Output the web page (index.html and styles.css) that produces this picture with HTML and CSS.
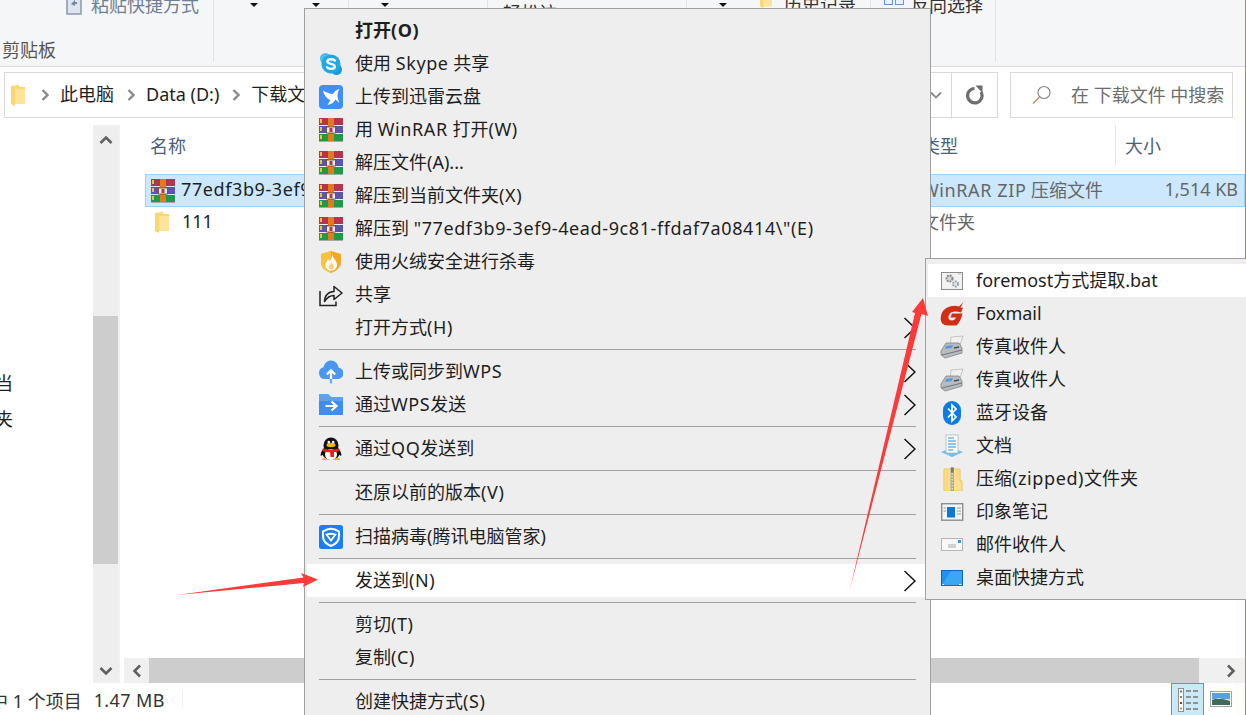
FILE: index.html
```html
<!DOCTYPE html>
<html lang="zh-CN">
<head>
  <meta charset="UTF-8" />
  <title>下载文件</title>
  <link rel="stylesheet" href="styles.css">
</head>
<body>
  <svg class="defs" xmlns="http://www.w3.org/2000/svg">
    <symbol id="i-rar" viewBox="0 0 24 24">
      <rect y="0" width="24" height="7" fill="#b5344f"/>
      <rect y="8" width="24" height="7" fill="#5a55ad"/>
      <rect y="16" width="24" height="7" fill="#1f9a4a"/>
      <rect y="23" width="24" height="1" fill="#a8a8a8"/>
      <rect x="1" y="1" width="2" height="4" fill="#f2c230"/>
      <rect x="1" y="9" width="2" height="4" fill="#f2c230"/>
      <rect x="1" y="17" width="2" height="4" fill="#f2c230"/>
      <rect x="9" y="0" width="6" height="23" fill="#e27b20"/>
      <rect x="7.5" y="9" width="9" height="6" fill="#f4efe6" stroke="#70401c" stroke-width=".8"/>
      <rect x="10.5" y="10" width="3" height="4" fill="#b5344f"/>
    </symbol>
    <symbol id="i-skype" viewBox="0 0 24 24">
      <circle cx="6.5" cy="6.5" r="5.5" fill="#4dbcec"/>
      <circle cx="17.5" cy="17.5" r="5.5" fill="#1b9ad8"/>
      <circle cx="12" cy="12" r="9.5" fill="#1fa9e6"/>
      <path d="M16 8.6C14.6 6.8 8.6 6.4 8.4 9.4 8.2 12.6 16 11 15.8 14.6 15.6 17.6 9.6 17.4 8 15.2" fill="none" stroke="#fff" stroke-width="2.4" stroke-linecap="round"/>
    </symbol>
    <symbol id="i-xunlei" viewBox="0 0 24 24">
      <rect width="24" height="24" rx="4" fill="#3f8ff6"/>
      <path d="M20.5 4C17.5 4.800 15.500 6.500 14 9 11 8.800 7.500 7.800 4 5.500 5 10 8 14 11.500 15L8.500 20C12 19.500 15 17.500 16.500 14.500L20.500 18C19 15 18.500 12.500 18.500 10 18.500 8 19.300 6 20.500 4Z" fill="#fff"/>
    </symbol>
    <symbol id="i-huorong" viewBox="0 0 24 24">
      <path d="M12 1 22 4V12C22 18 17 21 12 23 7 21 2 18 2 12V4Z" fill="#f6a821"/>
      <path d="M12 1V23C7 21 2 18 2 12V4Z" fill="#f9c23c"/>
      <path d="M13 4C14 9 18 10.500 18 15 18 18.500 15.500 20.500 12 20.500 8.500 20.500 6.500 18 6.500 15 6.500 12.500 8.500 11.500 9 9L11 11C12.500 9 13.200 6.500 13 4Z" fill="#fff"/>
      <path d="M12.500 12C13 14 15 15 15 17 15 18.500 13.500 19.500 12 19.500 10.500 19.500 9.500 18.500 9.500 17 9.500 15.500 11.500 14.500 12.500 12Z" fill="#fbd27a"/>
    </symbol>
    <symbol id="i-share" viewBox="0 0 24 24">
      <path d="M1 8V22.500H17V18.500" fill="none" stroke="#222" stroke-width="1.500"/>
      <path d="M5.500 18.500C5.500 12.500 9.500 8.500 15 8.500V3.500L23 10 15 16.500V12.500C11 12.500 8 14.500 5.500 18.500Z" fill="none" stroke="#222" stroke-width="1.500" stroke-linejoin="round"/>
    </symbol>
    <symbol id="i-cloud" viewBox="0 0 24 24">
      <path d="M6 19A6 6 0 0 1 4.500 7.200C5.500 3 8.500 .5 12 .5 16 .5 19 3.500 19.500 7.500A5.800 5.800 0 0 1 18 19Z" fill="#4a97f2"/>
      <path d="M12 19V11M7.800 14.500 12 10.300 16.200 14.500" fill="none" stroke="#fff" stroke-width="2.300"/>
      <path d="M12 19V23.500" stroke="#6cabf5" stroke-width="2.300"/>
    </symbol>
    <symbol id="i-send" viewBox="0 0 24 24">
      <path d="M0 1H9L12 4H24V22H0Z" fill="#3e8df1"/>
      <path d="M0 1H9L12 4H24V8H0Z" fill="#5aa2f6"/>
      <path d="M6.500 13H17M12.500 8.500 17.500 13 12.500 17.500" fill="none" stroke="#fff" stroke-width="2.200"/>
    </symbol>
    <symbol id="i-qq" viewBox="0 0 24 24">
      <ellipse cx="12" cy="8.500" rx="7.500" ry="8" fill="#111"/>
      <ellipse cx="12" cy="16" rx="8.500" ry="7" fill="#111"/>
      <path d="M4 12C2 15 1 18 2 19L5 17ZM20 12C22 15 23 18 22 19L19 17Z" fill="#111"/>
      <ellipse cx="12" cy="17.500" rx="6" ry="5.500" fill="#fff"/>
      <ellipse cx="12" cy="8" rx="4.500" ry="2.200" fill="#f5b21e"/>
      <circle cx="9.800" cy="5" r="1.300" fill="#fff"/>
      <circle cx="14.200" cy="5" r="1.300" fill="#fff"/>
      <path d="M4 11C8 13 16 13 20 11L20.500 14C18 15 16 15 15 15V20H11.500L11 15C8 15.500 5 15 3.500 14Z" fill="#e2231a"/>
      <path d="M3 22C4 20.500 7 20.500 9 23H3ZM21 22C20 20.500 17 20.500 15 23H21Z" fill="#f5b21e"/>
    </symbol>
    <symbol id="i-guanjia" viewBox="0 0 24 24">
      <rect width="24" height="24" rx="2.500" fill="#1a7ff3"/>
      <path d="M4 6.500C9 3 15 3 20 6.500V11C20 16 16 19.500 12 21 8 19.500 4 16 4 11Z" fill="none" stroke="#fff" stroke-width="2"/>
      <path d="M7.500 9.500C10.500 8.500 13.500 8.500 16.500 9.500L12 15.500Z" fill="none" stroke="#fff" stroke-width="1.800"/>
    </symbol>
    <symbol id="i-bat" viewBox="0 0 24 24">
      <rect x="1.500" y="3.500" width="21" height="17" fill="#f2f2f2" stroke="#8c8c8c"/>
      <path d="M18 5H21" stroke="#bdbdbd"/>
      <circle cx="9.500" cy="9.500" r="3" fill="#d4d4d4" stroke="#858585" stroke-width="2" stroke-dasharray="1.800 1"/>
      <circle cx="15.500" cy="15" r="2.600" fill="#e2e2e2" stroke="#93a2ae" stroke-width="1.800" stroke-dasharray="1.800 1"/>
    </symbol>
    <symbol id="i-foxmail" viewBox="0 0 24 24">
      <path d="M23.500 0 19 4.500C13 2.500 4 5 1.500 12 -.5 18 1 23.500 8 23.500H16.500C19.500 21 21.500 16 22.500 11.500H12L10.500 15.500H16C15 18 13 18.800 10.500 18.300 7.500 17.800 8 12.500 11 10.500 13.500 9 17.500 9 21 10.500L23 6 20.500 5.500Z" fill="#d32d15"/>
    </symbol>
    <symbol id="i-fax" viewBox="0 0 24 24">
      <path d="M11 2 23 1 20 10 10 12Z" fill="#f1f1f1" stroke="#bbb" stroke-width=".8"/>
      <path d="M1 16 6 8 19 8 22 13 22 18 5 23 1 20Z" fill="#b8bcc0" stroke="#7f8488" stroke-width=".8"/>
      <path d="M6 11 13 10 12 13 5 14Z" fill="#5b9ad6"/>
      <path d="M2 20 22 15" stroke="#6f7478"/>
      <path d="M14 13 19 12" stroke="#4a4f55" stroke-width="1.500"/>
    </symbol>
    <symbol id="i-bt" viewBox="0 0 24 24">
      <rect x="3" width="18" height="24" rx="9" fill="#0b7be8"/>
      <path d="M8 7.500 16 16 12 20V4L16 8 8 16.500" fill="none" stroke="#fff" stroke-width="1.700"/>
    </symbol>
    <symbol id="i-doc" viewBox="0 0 24 24">
      <path d="M1 18 12 14 23 18 12 23Z" fill="#6cc0ef"/>
      <rect x="6" y="1" width="12" height="18" fill="#fff" stroke="#a9b5bf" stroke-width=".8"/>
      <path d="M8 4H14M8 7H16M8 10H16M8 13H16M8 16H13" stroke="#2a8ad8" stroke-width="1"/>
    </symbol>
    <symbol id="i-zip" viewBox="0 0 24 24">
      <path d="M4 2H20V14H22V24H4Z" fill="#fde08e" stroke="#eec458"/>
      <path d="M7 3V23M17 3V13" stroke="#f5cf6c"/>
      <rect x="10.500" y="0" width="3.500" height="24" fill="#a8a7a0"/>
      <path d="M12.200 6V23" stroke="#ecece6" stroke-width="1.200" stroke-dasharray="1.500 1.500"/>
      <rect x="11" y="1" width="2.500" height="4.500" fill="#77766f"/>
    </symbol>
    <symbol id="i-note" viewBox="0 0 24 24">
      <rect x="1.700" y="3.700" width="21" height="16.500" fill="#f4f4f4" stroke="#8d8d8d" stroke-width="1.400"/>
      <rect x="7" y="7" width="8" height="10.500" fill="#0a78d7"/>
      <path d="M17 8H21M17 11H21M17 14H21M3.500 8H6M3.500 11H6" stroke="#9a9a9a"/>
    </symbol>
    <symbol id="i-mail" viewBox="0 0 24 24">
      <rect x="1.500" y="5.500" width="21" height="12" fill="#f8f8f8" stroke="#b5b5b5"/>
      <rect x="18" y="7" width="3" height="3" fill="#3a96e8"/>
      <path d="M8 12H16M8 14H16" stroke="#a9a9a9"/>
    </symbol>
    <symbol id="i-desk" viewBox="0 0 24 24">
      <rect x="1.500" y="4.500" width="21" height="15" fill="#1c93ee" stroke="#0a68b8"/>
      <path d="M2 19 11 5H22V19Z" fill="#3aa6f4"/>
      <path d="M2.500 18.500H4M19 18.500H21.500" stroke="#fff"/>
    </symbol>
    <symbol id="i-folder" viewBox="0 0 14 21">
      <path d="M0 1 8 0V2H14V19H4V21L0 19Z" fill="#fbd671"/>
      <path d="M4 4H14V19H4Z" fill="#fde49a"/>
    </symbol>
  </svg>

  <div class="page">
    <div class="explorer">
      <div class="ribbon">
        <div class="group g-clip">
          <div class="group-top">
            <svg class="clip-icon" width="16" height="20" viewBox="0 0 16 20"><rect x="1" y="1" width="14" height="18" fill="#dfe5ee" stroke="#8698b2" stroke-width="1.500"/><path d="M5 9 9 5V7H11V9H9V11Z" fill="#7288a8"/></svg>
            <span class="group-text muted">粘贴快捷方式</span>
          </div>
          <div class="group-label">剪贴板</div>
        </div>
        <div class="group g-org">
          <div class="group-top"><i class="tick"></i><i class="caret c1"></i><i class="caret c2"></i></div>
        </div>
        <div class="group g-new">
          <div class="group-top"><i class="caret"></i></div>
        </div>
        <div class="group g-open">
          <div class="group-top"><span class="group-text low">轻松访</span></div>
        </div>
        <div class="group g-hist">
          <div class="group-top">
            <i class="caret"></i>
            <svg class="hist-icon" width="14" height="18"><use href="#i-folder"/></svg>
            <span class="group-text">历史记录</span>
          </div>
        </div>
        <div class="group g-sel">
          <div class="group-top">
            <svg class="sel-icon" width="20" height="16" viewBox="0 0 20 16"><rect x=".5" y=".5" width="8" height="7" fill="#eaf3fb" stroke="#5b9bd5"/><rect x="11.500" y=".5" width="8" height="7" fill="#eaf3fb" stroke="#5b9bd5"/></svg>
            <span class="group-text">反向选择</span>
          </div>
          <div class="group-label">选择</div>
        </div>
      </div>

      <div class="address-row">
        <div class="address">
          <svg class="addr-folder" width="14" height="21"><use href="#i-folder"/></svg>
          <svg class="crumb-sep" width="8" height="12" viewBox="0 0 8 12"><path d="M1.500 1 6.500 6 1.500 11" fill="none" stroke="#8a8a8a" stroke-width="2.400"/></svg>
          <span>此电脑</span>
          <svg class="crumb-sep" width="8" height="12" viewBox="0 0 8 12"><path d="M1.500 1 6.500 6 1.500 11" fill="none" stroke="#8a8a8a" stroke-width="2.400"/></svg>
          <span>Data (D:)</span>
          <svg class="crumb-sep" width="8" height="12" viewBox="0 0 8 12"><path d="M1.500 1 6.500 6 1.500 11" fill="none" stroke="#8a8a8a" stroke-width="2.400"/></svg>
          <span>下载文</span>
          <svg class="addr-drop" width="12" height="8" viewBox="0 0 12 8"><path d="M1 1.500 6 6.500 11 1.500" fill="none" stroke="#8a8a8a" stroke-width="1.800"/></svg>
          <div class="refresh">
            <svg width="20" height="20" viewBox="0 0 20 20"><path d="M16 7A7.200 7.200 0 1 1 9.500 3.500" fill="none" stroke="#6d6d6d" stroke-width="3.200"/><path d="M10.500 .5 17.500 .5 17.500 8Z" fill="#6d6d6d"/></svg>
          </div>
        </div>
        <div class="search">
          <svg width="20" height="20" viewBox="0 0 20 20"><circle cx="12" cy="7.500" r="6" fill="none" stroke="#8a8a8a" stroke-width="1.200"/><path d="M7.500 12 1 18.500" stroke="#c08a5a" stroke-width="1.400"/></svg>
          <span>在 下载文件 中搜索</span>
        </div>
      </div>

      <div class="main">
        <div class="nav">
          <div class="nav-list">
            <div class="nav-item">当</div>
            <div class="nav-item">夹</div>
          </div>
          <div class="vscroll">
            <svg class="arrow-up" width="14" height="10" viewBox="0 0 14 10"><path d="M1.500 8 7 2.500 12.500 8" fill="none" stroke="#606060" stroke-width="2.600"/></svg>
            <div class="vthumb"></div>
            <svg class="arrow-down" width="14" height="10" viewBox="0 0 14 10"><path d="M1.500 2 7 7.500 12.500 2" fill="none" stroke="#606060" stroke-width="2.600"/></svg>
          </div>
        </div>
        <div class="files">
          <div class="file-head">
            <div class="col-name">名称</div>
            <div class="col-type">类型</div>
            <div class="col-size">大小</div>
          </div>
          <div class="file-list">
            <div class="file-row selected">
              <div class="file-name"><svg width="24" height="24"><use href="#i-rar"/></svg><span class="hex">77edf3b9-3ef9</span></div>
              <div><span class="key">WinRAR ZIP</span> 压缩文件</div>
              <div class="file-size">1,514 KB</div>
            </div>
            <div class="file-row">
              <div class="file-name folder"><svg width="14" height="21"><use href="#i-folder"/></svg><span>111</span></div>
              <div>文件夹</div>
              <div class="file-size"></div>
            </div>
          </div>
          <div class="hscroll">
            <div class="hbtn"><svg width="10" height="14" viewBox="0 0 10 14"><path d="M8 1.500 2.500 7 8 12.500" fill="none" stroke="#606060" stroke-width="2.600"/></svg></div>
            <div class="hthumb"></div>
            <div class="hbtn"><svg width="10" height="14" viewBox="0 0 10 14"><path d="M2 1.500 7.500 7 2 12.500" fill="none" stroke="#606060" stroke-width="2.600"/></svg></div>
          </div>
        </div>
      </div>

      <div class="status">
        <span class="status-count">中 1 个项目</span>
        <span class="status-size">1.47 MB</span>
        <i class="status-sep"></i>
        <div class="view-btn active">
          <svg width="20" height="24" viewBox="0 0 20 24"><rect x=".5" y=".5" width="5" height="23" fill="#fff" stroke="#8d8d8d"/><rect x="2" y="2.500" width="2" height="2" fill="#5a7a9a"/><rect x="2" y="8" width="2" height="2" fill="#7a8a5a"/><rect x="2" y="14" width="2" height="2" fill="#b03020"/><rect x="2" y="19.500" width="2" height="2" fill="#b09a50"/><path d="M8 3H13M15 3H20M8 9H13M15 9H20M8 15H13M15 15H20M8 21H13M15 21H20" stroke="#777" stroke-width="1.300"/></svg>
        </div>
        <div class="view-btn">
          <svg width="22" height="16" viewBox="0 0 22 16"><rect x=".5" y=".5" width="21" height="15" fill="#fff" stroke="#a0a0a0"/><rect x="2" y="2" width="18" height="6" fill="#5aa0e0"/><rect x="2" y="8" width="18" height="6" fill="#3f6a58"/><path d="M2 9 9 7 20 10V8H2Z" fill="#cfe0d8"/></svg>
        </div>
      </div>
    </div>

    <div class="menu menu-main">
      <div class="item"><span class="icon"></span><span class="label strong">打开<span class="key">(O)</span></span></div>
      <div class="item"><svg class="icon"><use href="#i-skype"/></svg><span class="label">使用 <span class="key">Skype</span> 共享</span></div>
      <div class="item"><svg class="icon"><use href="#i-xunlei"/></svg><span class="label">上传到迅雷云盘</span></div>
      <div class="item"><svg class="icon"><use href="#i-rar"/></svg><span class="label">用 <span class="key">WinRAR</span> 打开<span class="key">(W)</span></span></div>
      <div class="item"><svg class="icon"><use href="#i-rar"/></svg><span class="label">解压文件(A)...</span></div>
      <div class="item"><svg class="icon"><use href="#i-rar"/></svg><span class="label">解压到当前文件夹<span class="key">(X)</span></span></div>
      <div class="item"><svg class="icon"><use href="#i-rar"/></svg><span class="label">解压到 <span class="hex">"77edf3b9-3ef9-4ead-9c81-ffdaf7a08414\"(E)</span></span></div>
      <div class="item"><svg class="icon"><use href="#i-huorong"/></svg><span class="label">使用火绒安全进行杀毒</span></div>
      <div class="item"><svg class="icon"><use href="#i-share"/></svg><span class="label">共享</span></div>
      <div class="item"><span class="icon"></span><span class="label">打开方式<span class="key">(H)</span></span>
        <svg class="more" viewBox="0 0 12 22"><path d="M.5 1 11 11 .5 21"/></svg></div>
      <div class="sep"></div>
      <div class="item"><svg class="icon"><use href="#i-cloud"/></svg><span class="label">上传或同步到<span class="key">WPS</span></span>
        <svg class="more" viewBox="0 0 12 22"><path d="M.5 1 11 11 .5 21"/></svg></div>
      <div class="item"><svg class="icon"><use href="#i-send"/></svg><span class="label">通过<span class="key">WPS</span>发送</span>
        <svg class="more" viewBox="0 0 12 22"><path d="M.5 1 11 11 .5 21"/></svg></div>
      <div class="sep"></div>
      <div class="item"><svg class="icon"><use href="#i-qq"/></svg><span class="label">通过<span class="key">QQ</span>发送到</span>
        <svg class="more" viewBox="0 0 12 22"><path d="M.5 1 11 11 .5 21"/></svg></div>
      <div class="sep"></div>
      <div class="item"><span class="icon"></span><span class="label">还原以前的版本<span class="key">(V)</span></span></div>
      <div class="sep"></div>
      <div class="item"><svg class="icon"><use href="#i-guanjia"/></svg><span class="label">扫描病毒(腾讯电脑管家)</span></div>
      <div class="sep"></div>
      <div class="item hot"><span class="icon"></span><span class="label">发送到<span class="key">(N)</span></span>
        <svg class="more" viewBox="0 0 12 22"><path d="M.5 1 11 11 .5 21"/></svg></div>
      <div class="sep"></div>
      <div class="item"><span class="icon"></span><span class="label">剪切<span class="key">(T)</span></span></div>
      <div class="item"><span class="icon"></span><span class="label">复制<span class="key">(C)</span></span></div>
      <div class="sep"></div>
      <div class="item"><span class="icon"></span><span class="label">创建快捷方式<span class="key">(S)</span></span></div>
    </div>

    <div class="menu menu-send">
      <div class="item hot"><svg class="icon"><use href="#i-bat"/></svg><span class="label">foremost方式提取.bat</span></div>
      <div class="item"><svg class="icon"><use href="#i-foxmail"/></svg><span class="label">Foxmail</span></div>
      <div class="item"><svg class="icon"><use href="#i-fax"/></svg><span class="label">传真收件人</span></div>
      <div class="item"><svg class="icon"><use href="#i-fax"/></svg><span class="label">传真收件人</span></div>
      <div class="item"><svg class="icon"><use href="#i-bt"/></svg><span class="label">蓝牙设备</span></div>
      <div class="item"><svg class="icon"><use href="#i-doc"/></svg><span class="label">文档</span></div>
      <div class="item"><svg class="icon"><use href="#i-zip"/></svg><span class="label">压缩<span class="key">(zipped)</span>文件夹</span></div>
      <div class="item"><svg class="icon"><use href="#i-note"/></svg><span class="label">印象笔记</span></div>
      <div class="item"><svg class="icon"><use href="#i-mail"/></svg><span class="label">邮件收件人</span></div>
      <div class="item"><svg class="icon"><use href="#i-desk"/></svg><span class="label">桌面快捷方式</span></div>
    </div>

    <svg class="marks" width="1246" height="715" viewBox="0 0 1246 715">
      <path d="M177 595 303.500 577.500 301 573 318 579.500 303 587 304 583Z" fill="#fb3a3a"/>
      <path d="M849.500 591 915 313 912 312 923 298 928 316 921.500 314Z" fill="#fb3a3a"/>
    </svg>
  </div>
</body>
</html>
```

FILE: styles.css
```css
* {
  box-sizing: border-box;
}

body {
  margin: 0;
  font-family: "Noto Sans", "Noto Sans CJK SC", sans-serif;
  font-size: 18px;
  color: #1e1e1e;
  background: #fff;
}

.defs {
  display: none;
}

.page {
  position: relative;
  width: 1246px;
  height: 715px;
  overflow: hidden;
}

.explorer {
  display: flex;
  flex-direction: column;
  height: 715px;
  border-right: 1px solid #d9735c;
}

/* ribbon */
.ribbon {
  display: flex;
  height: 67px;
  background: #f5f6f7;
  border-bottom: 1px solid #dadbdc;
  overflow: hidden;
}

.group {
  display: flex;
  flex-direction: column;
  justify-content: space-between;
  height: 62px;
  border-right: 1px solid #e2e3e4;
}

.group-top {
  display: flex;
  align-items: center;
  height: 18px;
  margin-top: -4px;
}

.group-text {
  line-height: 18px;
  color: #333;
  white-space: nowrap;
}

.group-text.muted {
  color: #6f7f92;
}

.group-text.low {
  margin-top: 16px;
}

.group-label {
  height: 24px;
  line-height: 24px;
  color: #555;
}

.g-clip {
  width: 214px;
  padding-left: 2px;
}

.clip-icon {
  margin-left: 64px;
  margin-right: 9px;
}

.g-org {
  width: 135px;
}

.g-new {
  width: 139px;
  padding-left: 32px;
}

.g-open {
  width: 199px;
  padding-left: 15px;
}

.g-hist {
  width: 184px;
  padding-left: 32px;
}

.g-sel {
  width: 125px;
  padding-left: 13px;
}

.sel-icon {
  margin-right: 7px;
}

.hist-icon {
  margin-left: 32px;
  margin-right: 11px;
  margin-top: -12px;
}

.tick {
  width: 4px;
  height: 3px;
  margin-left: 10px;
  margin-top: -14px;
  background: #555;
}

.caret {
  width: 0;
  height: 0;
  border-left: 4px solid transparent;
  border-right: 4px solid transparent;
  border-top: 4px solid #111;
}

.caret.c1 {
  margin-left: 22px;
}

.caret.c2 {
  margin-left: 54px;
}

/* address bar */
.address-row {
  display: flex;
  gap: 12px;
  padding: 5px 12px 0 4px;
}

.address {
  display: flex;
  align-items: center;
  flex: 0 0 994px;
  height: 46px;
  padding-left: 6px;
  border: 1px solid #d9d9d9;
}

.addr-folder {
  margin-right: 16px;
}

.crumb-sep {
  margin-right: 11px;
}

.address span {
  margin-right: 13px;
  margin-bottom: 3px;
  line-height: 40px;
}

.addr-drop {
  margin-left: auto;
  margin-right: 9px;
}

.refresh {
  display: flex;
  align-items: center;
  justify-content: center;
  width: 46px;
  height: 44px;
  border-left: 1px solid #d9d9d9;
}

.search {
  display: flex;
  align-items: center;
  flex: 1;
  height: 46px;
  padding-left: 21px;
  border: 1px solid #d9d9d9;
  color: #6d6d6d;
  white-space: nowrap;
}

.search span {
  margin-left: 19px;
  margin-bottom: 2px;
}

/* main area */
.main {
  display: flex;
  height: 558px;
  margin-top: 7px;
}

.nav {
  display: flex;
  flex: 0 0 120px;
  border-right: 2px solid #f0f0f0;
}

.nav-list {
  width: 93px;
  padding-top: 240px;
  margin-left: -5px;
  flex: 0 0 98px;
}

.nav-item {
  height: 36px;
  line-height: 36px;
}

.vscroll {
  display: flex;
  flex-direction: column;
  align-items: center;
  width: 25px;
  flex: 0 0 25px;
  background: #eee;
}

.arrow-up {
  margin-top: 10px;
  height: 10px;
}

.vthumb {
  width: 100%;
  height: 248px;
  margin-top: 171px;
  background: #cdcdcd;
}

.arrow-down {
  margin-top: auto;
  margin-bottom: 7px;
}

.files {
  display: flex;
  flex-direction: column;
  flex: 1;
  min-width: 0;
}

.file-head {
  display: flex;
  height: 40px;
  padding-left: 30px;
  color: #4c607a;
  line-height: 42px;
}

.col-name {
  width: 772px;
}

.col-type {
  width: 193px;
}

.col-size {
  height: 40px;
  padding-left: 9px;
  border-left: 1px solid #e5e5e5;
}

.file-list {
  flex: 1;
  padding-top: 9px;
  padding-left: 25px;
}

.file-row {
  display: grid;
  grid-template-columns: 776px 1fr auto;
  align-items: center;
  height: 31px;
  padding-right: 6px;
  padding-bottom: 3px;
  color: #666;
  white-space: nowrap;
  border: 1px solid transparent;
  border-left: 0;
}

.file-row.selected {
  height: 33px;
  background: #cce8ff;
  border: 1px solid #99d1ff;
}

.file-name {
  display: flex;
  align-items: center;
  gap: 6px;
  padding-left: 5px;
  color: #1e1e1e;
  overflow: hidden;
}

.file-name svg {
  flex: none;
  margin-top: 3px;
}

.file-name.folder {
  gap: 13px;
  padding-left: 10px;
}

.hex {
  letter-spacing: .6px;
}

.hscroll {
  display: flex;
  height: 25px;
  margin-left: 4px;
  background: #f0f0f0;
}

.hbtn {
  display: flex;
  align-items: center;
  justify-content: center;
  width: 25px;
}

.hthumb {
  flex: 1;
  background: #cdcdcd;
}

.hbtn:last-child {
  width: 46px;
  padding-left: 17px;
}

/* status bar */
.status {
  display: flex;
  align-items: center;
  flex: 1;
  color: #333;
  padding-right: 13px;
}

.status-count {
  margin-left: -10px;
  margin-top: 2px;
  white-space: nowrap;
}

.status-size {
  margin-left: 12px;
  margin-top: 2px;
  white-space: nowrap;
  letter-spacing: .4px;
}

.status-sep {
  width: 1px;
  height: 16px;
  margin-left: 17px;
  background: #eee;
}

.view-btn {
  display: flex;
  align-items: center;
  justify-content: center;
  height: 32px;
  width: 33px;
}

.view-btn.active {
  margin-left: auto;
  background: #cbe8f6;
  border: 1px solid #3fa3d6;
  border-bottom: 0;
  margin-right: 6px;
}

.view-btn:last-child {
  width: 22px;
}

/* context menus */
.menu {
  position: absolute;
  padding: 5px 2px;
  background: #eee;
  border: 1px solid #a0a0a0;
}

.menu-main {
  top: 8px;
  left: 304px;
  width: 627px;
}

.menu-send {
  top: 258px;
  left: 925px;
  width: 330px;
}

.item {
  display: flex;
  align-items: center;
  height: 33px;
  white-space: nowrap;
}

.item.hot {
  background: #fff;
}

.icon {
  flex: 0 0 24px;
  width: 24px;
  height: 24px;
  margin-left: 12px;
}

.label {
  margin-left: 12px;
  line-height: 33px;
}

.label.strong {
  font-weight: 700;
}

.key {
  letter-spacing: .6px;
}

.more {
  width: 12px;
  height: 22px;
  margin-left: auto;
  margin-right: 12px;
  fill: none;
  stroke: #111;
  stroke-width: 1.500;
}

.sep {
  height: 1px;
  margin: 5px 12px;
  background: #a0a0a0;
}

.marks {
  position: absolute;
  top: 0;
  left: 0;
  pointer-events: none;
}
```
